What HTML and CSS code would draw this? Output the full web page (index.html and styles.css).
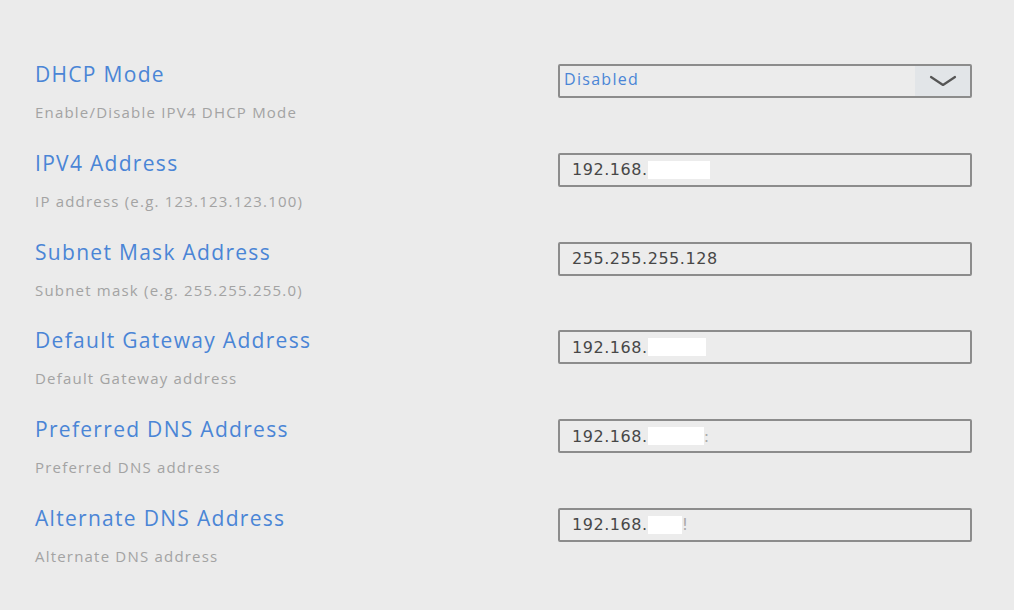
FILE: index.html
```html
<!DOCTYPE html>
<html>
<head>
<meta charset="utf-8">
<link rel="stylesheet" href="styles.css">
</head>
<body>
<div class="form">
  <div class="row">
    <div class="info">
      <div class="label">DHCP Mode</div>
      <div class="desc">Enable/Disable IPV4 DHCP Mode</div>
    </div>
    <div class="field select">
      <span class="value blue">Disabled</span>
      <span class="arrow"><svg width="30" height="14" viewBox="0 0 30 14"><path d="M3 3 L15 11 L27 3" fill="none" stroke="#555" stroke-width="2.2" stroke-linecap="round" stroke-linejoin="round"/></svg></span>
    </div>
  </div>
  <div class="row">
    <div class="info">
      <div class="label">IPV4 Address</div>
      <div class="desc">IP address (e.g. 123.123.123.100)</div>
    </div>
    <div class="field"><span class="value">192.168.</span><span class="mask w62"></span></div>
  </div>
  <div class="row">
    <div class="info">
      <div class="label">Subnet Mask Address</div>
      <div class="desc">Subnet mask (e.g. 255.255.255.0)</div>
    </div>
    <div class="field"><span class="value">255.255.255.128</span></div>
  </div>
  <div class="row">
    <div class="info">
      <div class="label">Default Gateway Address</div>
      <div class="desc">Default Gateway address</div>
    </div>
    <div class="field"><span class="value">192.168.</span><span class="mask w58"></span></div>
  </div>
  <div class="row">
    <div class="info">
      <div class="label">Preferred DNS Address</div>
      <div class="desc">Preferred DNS address</div>
    </div>
    <div class="field"><span class="value">192.168.</span><span class="mask w56"></span><span class="value tail">:</span></div>
  </div>
  <div class="row">
    <div class="info">
      <div class="label">Alternate DNS Address</div>
      <div class="desc">Alternate DNS address</div>
    </div>
    <div class="field"><span class="value">192.168.</span><span class="mask w34"></span><span class="value tail">!</span></div>
  </div>
</div>
</body>
</html>
```
FILE: styles.css
```css
html, body {
  margin: 0;
  padding: 0;
  background: #ebebeb;
}
body {
  width: 1014px;
  height: 610px;
  overflow: hidden;
}
.form {
  padding: 62px 0 0 35px;
}
.row {
  display: grid;
  grid-template-columns: 523px 414px;
  height: 88.8px;
}
.info {
  display: flex;
  flex-direction: column;
}
.label {
  font-family: "Open Sans", "Noto Sans", sans-serif;
  font-size: 21px;
  line-height: 24px;
  color: #4a85d6;
  letter-spacing: 1.3px;
}
.desc {
  margin-top: 16px;
  font-family: "Open Sans", "Noto Sans", sans-serif;
  font-size: 15px;
  line-height: 20px;
  color: #a3a3a3;
  letter-spacing: 1.2px;
}
.field {
  margin-top: 2px;
  height: 34px;
  box-sizing: border-box;
  border: 2px solid #8c8c8c;
  border-radius: 2px;
  display: flex;
  align-items: center;
  padding-left: 12px;
  background: #ececec;
}
.value {
  font-family: "DejaVu Sans", sans-serif;
  font-size: 16px;
  letter-spacing: 0.55px;
  color: #474747;
}
.value.blue {
  color: #4a85d6;
  font-family: "Open Sans", "Noto Sans", sans-serif;
  font-size: 16px;
  letter-spacing: 1.3px;
  margin-top: -4px;
}
.select {
  padding-left: 4px;
  padding-right: 0;
}
.select .value {
  flex: 1;
}
.arrow {
  width: 55px;
  height: 100%;
  background: #e2e5e8;
  display: flex;
  align-items: center;
  justify-content: center;
}
.mask {
  display: inline-block;
  height: 18px;
  background: #ffffff;
}
.w62 { width: 62px; }
.w58 { width: 58px; }
.w56 { width: 56px; }
.w34 { width: 34px; }
.tail {
  color: #aaaaaa;
}
```
